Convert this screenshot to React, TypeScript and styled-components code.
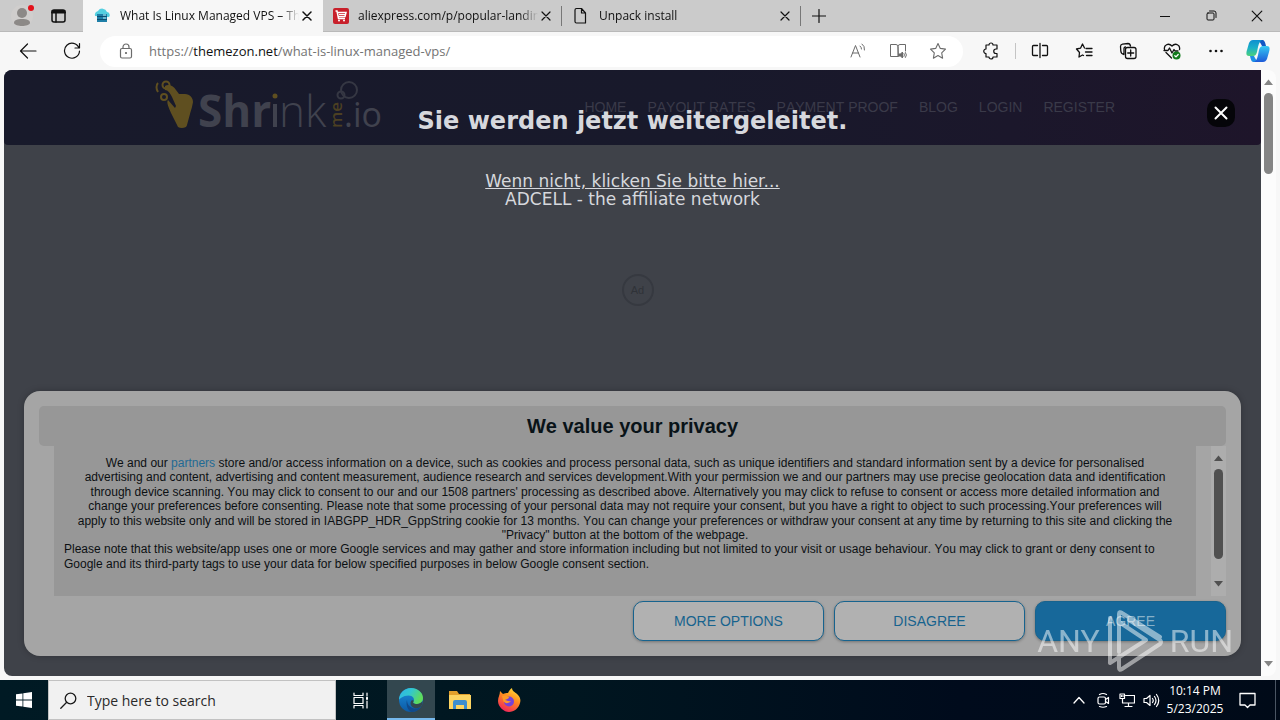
import React from "react";
import styled, { createGlobalStyle } from "styled-components";

const ui = `"Open Sans", "Noto Sans", sans-serif`;
const arial = `"Liberation Sans", Arial, sans-serif`;
const verdana = `"DejaVu Sans", Verdana, sans-serif`;

const GlobalStyle = createGlobalStyle`
  * { box-sizing: border-box; }
  body { margin: 0; background: #f7f7f7; font-family: ${ui}; font-kerning: none; color: #111; }
  button { border: 0; padding: 0; background: none; font: inherit; font-kerning: none; color: inherit; cursor: pointer; }
  svg { display: block; flex: none; }
`;

const Shell = styled.div`
  position: relative;
  display: flex;
  flex-direction: column;
  height: 100vh;
  min-height: 560px;
  overflow: hidden;
`;

/* ---------- tab strip ---------- */
const TabStrip = styled.div`
  display: flex;
  height: 32px;
  background: #cbcbcb;
  border-bottom: 1px solid #b9b9b9;
`;
const StripStart = styled.div`
  display: flex;
  align-items: center;
  width: 83px;
  padding-left: 10px;
  gap: 14px;
`;
const Tab = styled.div<{ $active?: boolean; $line?: boolean }>`
  display: flex;
  align-items: center;
  width: ${(p) => (p.$active ? 240 : 239)}px;
  height: 32px;
  padding: 0 8px 0 10px;
  font-size: 12px;
  line-height: 32px;
  background: ${(p) => (p.$active ? "#f7f7f7" : "transparent")};
  position: relative;
  &::after {
    content: "";
    display: ${(p) => (p.$line ? "block" : "none")};
    position: absolute;
    right: 0;
    top: 6px;
    height: 20px;
    border-right: 1px solid #777;
  }
`;
const TabTitle = styled.span`
  flex: 1;
  min-width: 0;
  margin-left: 9px;
  overflow: hidden;
  white-space: nowrap;
  mask-image: linear-gradient(to right, #000 90%, transparent 100%);
`;
const TabClose = styled.button`
  display: grid;
  place-items: center;
  width: 16px;
  height: 16px;
`;
const NewTab = styled.button`
  display: grid;
  place-items: center;
  width: 36px;
`;
const WindowButtons = styled.div`
  display: flex;
  margin-left: auto;
`;
const WindowButton = styled.button`
  display: grid;
  place-items: center;
  width: 46px;
`;

/* ---------- toolbar ---------- */
const Toolbar = styled.div`
  display: flex;
  align-items: center;
  height: 38px;
  padding: 0 2px 0 6px;
  background: #f7f7f7;
`;
const ToolButton = styled.button<{ $w?: number }>`
  display: grid;
  place-items: center;
  width: ${(p) => p.$w ?? 44}px;
  height: 30px;
`;
const ToolDivider = styled.span`
  width: 1px;
  height: 16px;
  margin: 0 2px;
  background: #c4c4c4;
`;
const AddressBar = styled.div`
  display: flex;
  align-items: center;
  flex: 1;
  height: 31px;
  margin: 0 6px;
  padding: 0 5px 0 18px;
  border-radius: 16px;
  background: #fff;
  color: #6b6b6b;
`;
const Url = styled.a`
  flex: 1;
  margin-left: 15px;
  font-size: 13px;
  line-height: 20px;
  color: #747474;
  text-decoration: none;
  b { font-weight: 400; color: #111; }
`;

/* ---------- page area ---------- */
const Frame = styled.div`
  display: flex;
  flex: 1;
  min-height: 0;
  padding: 0 4px 4px;
`;
const Page = styled.main`
  position: relative;
  flex: 1;
  border-radius: 8px 0 0 8px;
  background: #3f4249;
  overflow: hidden;
`;
const SiteHeader = styled.header`
  display: flex;
  justify-content: space-between;
  height: 75px;
  padding: 8px 146px 0 150px;
  border-radius: 0 0 4px 4px;
  background: linear-gradient(90deg, #181a2b 0%, #18192b 55%, #1b172b 80%, #1e152a 100%);
`;
const SiteNav = styled.nav`
  display: flex;
  gap: 21px;
  padding-top: 21px;
`;
const NavLink = styled.a`
  font: 14px/16px ${arial};
  font-kerning: none;
  color: #3a3a49;
  text-decoration: none;
`;
const Redirect = styled.section`
  position: absolute;
  inset: 35px 0 auto;
  text-align: center;
  font: 17px/18px ${verdana};
  color: #d6d8dd;
`;
const RedirectTitle = styled.h1`
  margin: 0 0 35px;
  font-size: 24px;
  line-height: 32px;
`;
const RedirectLink = styled.a`
  color: inherit;
`;
const CloseAd = styled.button`
  position: absolute;
  top: 29px;
  right: 26px;
  display: grid;
  place-items: center;
  width: 28px;
  height: 28px;
  border-radius: 10px;
  background: #050509;
`;
const AdBadge = styled.div`
  display: grid;
  place-items: center;
  width: 32px;
  height: 32px;
  margin: 129px auto 0;
  border: 2px solid #363940;
  border-radius: 50%;
  font: 11px/14px ${arial};
  color: #2f3238;
  transform: translateX(5px);
`;

/* ---------- consent dialog ---------- */
const Consent = styled.section`
  position: absolute;
  left: 20px;
  right: 20px;
  bottom: 20px;
  padding: 15px;
  border-radius: 16px;
  background: #a5a5a5;
  box-shadow: 0 0 6px rgba(0, 0, 0, 0.25);
  font-family: ${arial};
  color: #0c1013;
`;
const ConsentTitle = styled.h2`
  margin: 0;
  border-radius: 5px;
  background: #979797;
  font-size: 20px;
  line-height: 40px;
  text-align: center;
  color: #091318;
`;
const ConsentBody = styled.div`
  display: flex;
  height: 150px;
  padding-left: 15px;
`;
const ConsentText = styled.div`
  flex: 1;
  margin-right: 15px;
  padding: 10px 10px 0;
  background: #979797;
  font-size: 12px;
  line-height: 1.2;
  white-space: nowrap;
`;
const Paragraph = styled.p<{ $centered?: boolean }>`
  margin: 0;
  text-align: ${(p) => (p.$centered ? "center" : "left")};
`;
const PartnersLink = styled.a`
  color: #1f6a94;
  text-decoration: none;
`;
const Actions = styled.div`
  display: flex;
  justify-content: flex-end;
  gap: 10px;
  padding-top: 5px;
`;
const ActionButton = styled.button<{ $primary?: boolean }>`
  width: 191px;
  height: 40px;
  border: 1px solid #17638e;
  border-radius: 10px;
  background: ${(p) => (p.$primary ? "#17689a" : "#b1b1b1")};
  color: ${(p) => (p.$primary ? "#86b0c8" : "#17638e")};
  font-size: 14px;
  box-shadow: 0 1px 3px rgba(0, 0, 0, 0.3);
`;

/* ---------- scroll bars ---------- */
const ScrollTrack = styled.div<{ $inner?: boolean }>`
  display: flex;
  flex-direction: column;
  align-items: center;
  width: 15px;
  padding: 9px 0;
  border-radius: ${(p) => (p.$inner ? "0" : "0 8px 8px 0")};
  background: ${(p) => (p.$inner ? "#adadad" : "#fcfcfc")};
  color: ${(p) => (p.$inner ? "#505050" : "#858585")};
`;
const ScrollThumb = styled.div<{ $h: number }>`
  width: 9px;
  height: ${(p) => p.$h}px;
  margin: 8px 0 auto;
  border-radius: 5px;
  background: currentColor;
`;

/* ---------- watermark ---------- */
const Watermark = styled.div`
  position: absolute;
  right: 47px;
  bottom: 47px;
  display: flex;
  align-items: center;
  gap: 7px;
  height: 64px;
  color: #fff;
  opacity: 0.5;
  font: 32px/64px Roboto, ${arial};
  pointer-events: none;
`;

/* ---------- task bar ---------- */
const TaskBar = styled.footer`
  display: flex;
  height: 40px;
  background: linear-gradient(90deg, #001a24 0%, #001620 45%, #000b1c 75%, #000a18 100%);
  color: #fff;
`;
const TaskButton = styled.button<{ $active?: boolean; $w?: number }>`
  display: grid;
  place-items: center;
  width: ${(p) => p.$w ?? 48}px;
  margin-right: 1px;
  background: ${(p) => (p.$active ? "#33474f" : "none")};
  box-shadow: ${(p) => (p.$active ? "inset 0 -2px #76b9ed" : "none")};
`;
const StartButton = styled.button`
  display: grid;
  place-items: center;
  width: 48px;
`;
const SearchBox = styled.label`
  display: flex;
  align-items: center;
  gap: 10px;
  width: 288px;
  padding-left: 11px;
  border: 1px solid #c2c2c2;
  background: #f1f1f1;
  color: #1a1a1a;
`;
const SearchInput = styled.input`
  flex: 1;
  min-width: 0;
  border: 0;
  padding: 1px 0 0;
  outline: 0;
  background: none;
  font: 14px/20px ${ui};
  &::placeholder { color: #2a2a2a; opacity: 1; }
`;
const Tray = styled.div`
  display: flex;
  margin-left: auto;
  padding-right: 8px;
  margin-right: 4px;
  border-right: 1px solid #4a5563;
`;
const TrayButton = styled.button<{ $w?: number }>`
  display: grid;
  place-items: center;
  width: ${(p) => p.$w ?? 24}px;
`;
const Clock = styled.time`
  width: 64px;
  padding-top: 2px;
  font-size: 12px;
  line-height: 18px;
  text-align: center;
  white-space: nowrap;
`;

type IconProps = { w?: number; h?: number; sw?: number; box?: string; children: React.ReactNode };
const Icon = ({ w = 16, h, sw = 1, box, children }: IconProps) => (
  <svg width={w} height={h ?? w} viewBox={box ?? `0 0 ${w} ${h ?? w}`} fill="none" stroke="currentColor"
    strokeWidth={sw} strokeLinecap="round" strokeLinejoin="round" aria-hidden="true">{children}</svg>
);

const Cross = ({ size = 10, sw = 1 }) => (
  <Icon w={size} box="0 0 10 10" sw={sw}><path d="M1 1l8 8M9 1l-8 8" /></Icon>
);
const Arrow = ({ down }: { down?: boolean }) => (
  <svg width="9" height="6" viewBox="0 0 9 6" fill="currentColor"><path d={down ? "M0 0h9L4.500 5.500z" : "M0 6h9L4.500.500z"} /></svg>
);

const ShrinkLogo = () => (
  <svg width="230" height="54" viewBox="0 0 230 54" role="img" aria-label="ShrinkMe.io">
    <g fill="#5f4f20">
      <path d="M11 8c3-2 8-1 11 4l3 4 6 0c5 0 8 4 8 8-1 6-2 8-3 12l-3 11c0 3-6 4-9 2-3-6-5-10-7-14-2-5-5-11-3-13l7 8 1-2-4-9c-2-4-4-7-7-7z" />
    </g>
    <g fill="none" stroke="#5f4f20" strokeWidth="2">
      <circle cx="12" cy="7" r="3.500" /><circle cx="10" cy="19" r="3" /><path d="M4 5c-2 2-2 6 0 9" />
    </g>
    <g fill="#40424e" fontFamily="Open Sans, sans-serif">
      <text x="44" y="49" fontSize="44" fontWeight="700">Shr</text>
      <rect x="119" y="26" width="4" height="23" />
      <text x="125" y="49" fontSize="44" fontWeight="300">n</text>
      <text x="151" y="49" fontSize="44" fontWeight="300">k</text>
      <text x="190" y="49" fontSize="34">.io</text>
    </g>
    <circle cx="121" cy="18" r="2.500" fill="#5f4f20" />
    <text transform="translate(188 50) rotate(-90)" fontSize="17" fontWeight="600" fontFamily="Open Sans, sans-serif" fill="#4c4022">me</text>
    <g fill="none" stroke="#353743" strokeWidth="2"><circle cx="195" cy="12" r="8" /><circle cx="187" cy="17" r="3.500" /></g>
  </svg>
);

const App = () => (
  <Shell>
    <GlobalStyle />
    <TabStrip>
      <StripStart>
        <svg width="26" height="26" viewBox="0 0 26 26">
          <circle cx="12" cy="13" r="11" fill="#d0cecd" />
          <circle cx="12" cy="10" r="5" fill="#8c8987" /><path d="M4 20c0-3 3-4 8-4s8 1 8 4c-1 4-15 4-16 0z" fill="#8c8987" />
          <circle cx="21" cy="5" r="3" fill="#e3121b" />
        </svg>
        <Icon w={16} sw={1.500}><rect x="2" y="2" width="13" height="12" rx="2" /><path d="M2 4.500h13M2.500 3h12" strokeWidth="2" /><path d="M6 5v9" /></Icon>
      </StripStart>
      <Tab $active>
        <svg width="18" height="16" viewBox="0 0 18 16">
          <path d="M2 8a4 4 0 0 1 3-5 5 5 0 0 1 9 1 3 3 0 0 1 2 5z" fill="#54cfe0" />
          <path d="M4 6h10v8H4z" fill="#1f7fa8" /><path d="M4 8.500h10M4 11.500h10" stroke="#0c4f72" /><path d="M10 7h3M10 10h3" stroke="#baf3fa" />
        </svg>
        <TabTitle>What Is Linux Managed VPS – Themezon</TabTitle>
        <TabClose aria-label="Close tab"><Cross sw={1.500} /></TabClose>
      </Tab>
      <Tab $line>
        <svg width="16" height="16" viewBox="0 0 16 16">
          <rect width="16" height="16" rx="2" fill="#c8202b" />
          <path d="M2.500 3H4l1.500 7.500h6.500M4.500 4.500H13l-1 4H5.500" stroke="#fff" strokeWidth="1.500" fill="none" /><path d="M6 6.500h6" stroke="#fff" /><circle cx="6" cy="12.500" r="1" fill="#fff" /><circle cx="11" cy="12.500" r="1" fill="#fff" />
        </svg>
        <TabTitle>aliexpress.com/p/popular-landing</TabTitle>
        <TabClose aria-label="Close tab"><Cross sw={1.200} /></TabClose>
      </Tab>
      <Tab $line>
        <Icon w={18} sw={1.200}><path d="M4.500 1.500h5l4 4.500v10h-9q-1.500 0-1.500-1.500V3q0-1.500 1.500-1.500zM9.500 1.500V6h4" /></Icon>
        <TabTitle>Unpack install</TabTitle>
        <TabClose aria-label="Close tab"><Cross sw={1.200} /></TabClose>
      </Tab>
      <NewTab aria-label="New tab"><Icon w={14} sw={1.200}><path d="M7 0.500v13M.500 7h13" /></Icon></NewTab>
      <WindowButtons>
        <WindowButton aria-label="Minimize"><Icon w={10}><path d="M0 5.500h10" /></Icon></WindowButton>
        <WindowButton aria-label="Restore"><Icon w={11}><rect x="1" y="3" width="7" height="7" rx="1" /><path d="M3.500 1H8q2 0 2 2v4.500" /></Icon></WindowButton>
        <WindowButton aria-label="Close"><Cross size={12} /></WindowButton>
      </WindowButtons>
    </TabStrip>

    <Toolbar>
      <ToolButton aria-label="Back"><Icon w={18} sw={1.200}><path d="M17 9H1.500M8.500 2L1.500 9l7 7" /></Icon></ToolButton>
      <ToolButton aria-label="Refresh"><Icon w={18} sw={1.200}><path d="M16 6A7.500 7.500 0 1 0 16.500 9M16.500 1.500V6H12" /></Icon></ToolButton>
      <AddressBar>
        <Icon w={16} sw={1.200}><rect x="2.500" y="5.500" width="11" height="9.500" rx="1.500" /><path d="M5 5.500V4a3 3 0 0 1 6 0v1.500" /><circle cx="8" cy="10" r=".5" fill="currentColor" /></Icon>
        <Url href="#">https://<b>themezon.net</b>/what-is-linux-managed-vps/</Url>
        <ToolButton $w={40} aria-label="Read aloud"><Icon w={18}><path d="M2 15L6.500 3.500 11 15M3.500 11h6M11 4q1.500 1 1.500 3M13 2q3 2 2.500 6" /></Icon></ToolButton>
        <ToolButton $w={40} aria-label="Immersive reader"><Icon w={18}><path d="M9 14.500H1.500v-12H7Q9 2.500 9 4.500Zm0 0V4.500q0-2 2-2h5.500V9" /><path d="M10 12h1.500l2-2v6l-2-2H10z" fill="currentColor" /><path d="M15 11.500q1 1.500 0 3M16.500 10.500q2 2.500 0 5" /></Icon></ToolButton>
        <ToolButton $w={40} aria-label="Add to favorites"><Icon w={18} sw={1.100}><path d="M9 1.500l2.300 4.900 5.200.700-3.800 3.700.900 5.400L9 13.600l-4.600 2.600.900-5.400L1.500 7.100l5.200-.700z" /></Icon></ToolButton>
      </AddressBar>
      <ToolButton aria-label="Extensions"><Icon w={18} sw={1.200}><path d="M4 3h3a2 2 0 0 1 4 0h4v4h-1a2 2 0 0 0 0 4.500h1V15h-4a2 2 0 0 1-4 0H4v-3.500a2.200 2.200 0 1 1 0-4.500V3z" /></Icon></ToolButton>
      <ToolDivider />
      <ToolButton aria-label="Split screen"><Icon w={18} sw={1.300}><path d="M6.500 3.500h-4q-1 0-1 1v8q0 1 1 1h4M11.500 3.500h4q1 0 1 1v8q0 1-1 1h-4M9 1.500v14" /></Icon></ToolButton>
      <ToolButton aria-label="Favorites"><Icon w={18} sw={1.300}><path d="M9.500 6L7.500 2 5.500 6.200 1.500 7l3 3.500L4 15l3.500-2 1 .500M11 6.500h6M10.500 10h6.500M11.500 13.500h5.500" /></Icon></ToolButton>
      <ToolButton aria-label="Collections"><Icon w={18} sw={1.300}><path d="M5 12.500Q2 12 1.800 9L1.500 4.500q0-2 2-2.300L9 1.500q2 0 2.500 2.500M5 12V6.500q0-1.500 1.500-1.500" /><rect x="6.500" y="5.500" width="10.500" height="11" rx="2" /><path d="M11.700 8v6M8.700 11h6" /></Icon></ToolButton>
      <ToolButton aria-label="Browser essentials"><Icon w={18} sw={1.300}><path d="M1.500 7.500C.500 3 5.500.500 9 4c3.500-3.500 8.500-1 7.500 3.500M3 10.500l5.500 5.500M1 8.500h4l1.500-2.500L9 11l2-3.500 1 1.500h3" /><circle cx="13.500" cy="13.500" r="4" fill="#117a1b" stroke="none" /><path d="M11.800 13.700l1.200 1.200 2.200-2.400" stroke="#fff" /></Icon></ToolButton>
      <ToolButton aria-label="Settings and more"><Icon w={18}><g fill="currentColor" stroke="none"><circle cx="3.500" cy="9" r="1.300" /><circle cx="9" cy="9" r="1.300" /><circle cx="14.500" cy="9" r="1.300" /></g></Icon></ToolButton>
      <ToolButton $w={40} aria-label="Copilot">
        <svg width="24" height="24" viewBox="0 0 24 24">
          <defs>
            <linearGradient id="cpA" x1="0" y1="0" x2="0" y2="1"><stop offset="0" stopColor="#0f8fd0" /><stop offset=".5" stopColor="#1bb0c8" /><stop offset="1" stopColor="#4ad07a" /></linearGradient>
            <linearGradient id="cpB" x1="0" y1="0" x2="0" y2="1"><stop offset="0" stopColor="#35c8f3" /><stop offset="1" stopColor="#1e5ad8" /></linearGradient>
          </defs>
          <path d="M14 1h2c2 0 3 1 4 6h-4c-1-2-2-4-4-6z" fill="#1257c4" />
          <path d="M10 23H8c-2 0-3-1-4-6h4c1 2 2 4 4 6z" fill="#1d8fe5" />
          <path d="M7 1h9c-2 1-3 3-4 7l-1 5c-1 3-2 4-4 4H3c-3 0-3-3-2-6l2-7c1-2 2-3 4-3z" fill="url(#cpA)" />
          <path d="M17 23H8c2-1 3-3 4-7l1-5c1-3 2-4 4-4h4c3 0 3 3 2 6l-2 7c-1 2-2 3-4 3z" fill="url(#cpB)" />
        </svg>
      </ToolButton>
    </Toolbar>

    <Frame>
      <Page>
        <SiteHeader>
          <ShrinkLogo />
          <SiteNav>
            {["HOME", "PAYOUT RATES", "PAYMENT PROOF", "BLOG", "LOGIN", "REGISTER"].map((t) => (
              <NavLink key={t} href="#">{t}</NavLink>
            ))}
          </SiteNav>
        </SiteHeader>
        <AdBadge>Ad</AdBadge>
        <Redirect>
          <RedirectTitle>Sie werden jetzt weitergeleitet.</RedirectTitle>
          <RedirectLink href="#">Wenn nicht, klicken Sie bitte hier...</RedirectLink>
          <div>ADCELL - the affiliate network</div>
        </Redirect>
        <CloseAd aria-label="Close"><Icon w={14} sw={2}><path d="M1.500 1.500l11 11M12.500 1.500l-11 11" stroke="#fff" /></Icon></CloseAd>

        <Consent role="dialog" aria-labelledby="consent-title">
          <ConsentTitle id="consent-title">We value your privacy</ConsentTitle>
          <ConsentBody>
            <ConsentText>
              <Paragraph $centered>
                We and our <PartnersLink href="#">partners</PartnersLink> store and/or access information on a device, such as cookies and process personal data, such as unique identifiers and standard information sent by a device for personalised<br />
                advertising and content, advertising and content measurement, audience research and services development.With your permission we and our partners may use precise geolocation data and identification<br />
                through device scanning. You may click to consent to our and our 1508 partners' processing as described above. Alternatively you may click to refuse to consent or access more detailed information and<br />
                change your preferences before consenting. Please note that some processing of your personal data may not require your consent, but you have a right to object to such processing.Your preferences will<br />
                apply to this website only and will be stored in IABGPP_HDR_GppString cookie for 13 months. You can change your preferences or withdraw your consent at any time by returning to this site and clicking the<br />
                "Privacy" button at the bottom of the webpage.
              </Paragraph>
              <Paragraph>
                Please note that this website/app uses one or more Google services and may gather and store information including but not limited to your visit or usage behaviour. You may click to grant or deny consent to<br />
                Google and its third-party tags to use your data for below specified purposes in below Google consent section.
              </Paragraph>
            </ConsentText>
            <ScrollTrack $inner><Arrow /><ScrollThumb $h={90} /><Arrow down /></ScrollTrack>
          </ConsentBody>
          <Actions>
            <ActionButton>MORE OPTIONS</ActionButton>
            <ActionButton>DISAGREE</ActionButton>
            <ActionButton $primary>AGREE</ActionButton>
          </Actions>
        </Consent>
      </Page>
      <ScrollTrack><Arrow /><ScrollThumb $h={81} /><Arrow down /></ScrollTrack>
    </Frame>

    <Watermark>
      <span>ANY</span>
      <svg width="56" height="62" viewBox="0 0 56 62" fill="none" stroke="#fff" strokeWidth="4" strokeLinejoin="round" strokeLinecap="round">
        <path d="M12 42V4q0-3 3-1l38 24M3 8v45l36-23L12 12M3 53L39 30" />
        <path d="M12 46v12q0 3 3 1l38-25q2-2 0-4L22 10" />
      </svg>
      <span>RUN</span>
    </Watermark>

    <TaskBar>
      <StartButton aria-label="Start">
        <svg width="16" height="16" viewBox="0 0 16 16" fill="#fff"><path d="M0 2.300L6.500 1.400v6.200H0zM7.300 1.300L16 0v7.600H7.300zM0 8.400h6.500v6.200L0 13.700zM7.300 8.400H16V16l-8.700-1.300z" /></svg>
      </StartButton>
      <SearchBox>
        <Icon w={17} sw={1.300}><circle cx="10.500" cy="6.500" r="5.300" /><path d="M6.700 10.300L.800 16.200" /></Icon>
        <SearchInput placeholder="Type here to search" aria-label="Type here to search" />
      </SearchBox>
      <TaskButton $w={50} aria-label="Task view"><Icon w={17} sw={1.200}><path d="M1 1v2.500h9V1M1 16v-2.500h9V16M14 1v2.500M14 9v7" /><rect x="1" y="5.500" width="9" height="6" /><path d="M14 5.500v1.500" strokeWidth="2" /></Icon></TaskButton>
      <TaskButton $active aria-label="Edge">
        <svg width="24" height="24" viewBox="0 0 24 24">
          <defs>
            <linearGradient id="edA" x1="0" y1="0" x2="1" y2=".4"><stop offset="0" stopColor="#2fb4e8" /><stop offset=".5" stopColor="#32c7d0" /><stop offset="1" stopColor="#5fdc5a" /></linearGradient>
            <linearGradient id="edB" x1="0" y1="0" x2="0" y2="1"><stop offset="0" stopColor="#1c8fdc" /><stop offset="1" stopColor="#0c59a4" /></linearGradient>
          </defs>
          <circle cx="12" cy="12" r="12" fill="url(#edB)" />
          <path d="M0 12C0 5 5.500 0 12 0s12 4.500 12 10c0 4-3 6-6 6-3.500 0-4.500-1.300-3.500-2.500C16 11 14 7.500 9.500 7.500 4 7.500 0 11 0 12z" fill="url(#edA)" />
          <path d="M8 12c0 6 5 9 9.500 8.500 2-.300 4-1.500 4.500-2-2 4-6 5.500-10 5.500C9 22 6.500 17 8 12z" fill="#114a8b" />
          <path d="M14.500 13.500c-1 1.200 0 2.500 3.500 2.500 2 0 4-.800 5.400-3 .300 2.500-.400 4.500-1.400 5.500-2 1.500-4 2-6.500 1.500-4-1-5-5-3-7.500 1.500-.5 2.500 0 2 1z" fill="#33474f" />
        </svg>
      </TaskButton>
      <TaskButton aria-label="File Explorer">
        <svg width="22" height="20" viewBox="0 0 22 20"><path d="M0 1h8l2 3h11v4H0z" fill="#e2a02c" /><path d="M0 5h22v14H0z" fill="#fcd462" /><path d="M4 19v-7q0-2 2-2h10q2 0 2 2v7h-3v-4H7v4z" fill="#3c8ed0" /></svg>
      </TaskButton>
      <TaskButton aria-label="Firefox">
        <svg width="24" height="24" viewBox="0 0 24 24">
          <defs><linearGradient id="ffA" x1=".8" y1="0" x2=".3" y2="1"><stop offset="0" stopColor="#ffe13a" /><stop offset=".45" stopColor="#ff8a1f" /><stop offset="1" stopColor="#f0225c" /></linearGradient></defs>
          <path d="M1 13C1 9 3 7 3 3l3 3c2-1 3-1 5-1 1-2 2-4 4-5 0 3 3 4 5 6l1 1c2 2 3 5 2 8-1 5-6 9-11 9S1 19 1 13z" fill="url(#ffA)" />
          <circle cx="12" cy="13.500" r="5" fill="#7542d8" /><path d="M5 8c3-1 5 0 7 1 0 2-3 2-4 3 2 0 3 2 6 1-2 3-7 3-8-1z" fill="#ff9a26" />
        </svg>
      </TaskButton>
      <Tray>
        <TrayButton aria-label="Hidden icons"><Icon w={12} sw={1.300}><path d="M1 9l5-5.500L11 9" /></Icon></TrayButton>
        <TrayButton aria-label="Meet now"><Icon w={16} sw={1.200}><rect x="3" y="5" width="7.500" height="7" rx="1.500" /><path d="M10.500 7.500L13.500 5.500v6l-3-2M4.500 2.500q3.500-2 7 0M4.500 14.500q3.500 1.500 7 0" /></Icon></TrayButton>
        <TrayButton aria-label="Network"><Icon w={16} sw={1.200}><path d="M6.500 3.500h9v7.500H3.500V7M9.500 11v3.500M6 14.500h7" /><rect x="1" y="2" width="4.500" height="4.500" /><path d="M2.500 3.500v1M4 3.500v1" /></Icon></TrayButton>
        <TrayButton aria-label="Volume"><Icon w={17} sw={1.200}><path d="M1 6.500h2.500l3.500-3v10l-3.500-3H1zM9.500 6.500q1.500 2 0 4M11.500 4.500q3 4 0 8M13.500 2.500q4.500 6 0 12" /></Icon></TrayButton>
        <Clock>10:14 PM<br />5/23/2025</Clock>
        <TrayButton $w={40} aria-label="Notifications"><Icon w={17} sw={1.300}><path d="M1 1.500h15v11.500h-5L8.500 15.500 6 13H1z" /></Icon></TrayButton>
      </Tray>
    </TaskBar>
  </Shell>
);

export default App;
